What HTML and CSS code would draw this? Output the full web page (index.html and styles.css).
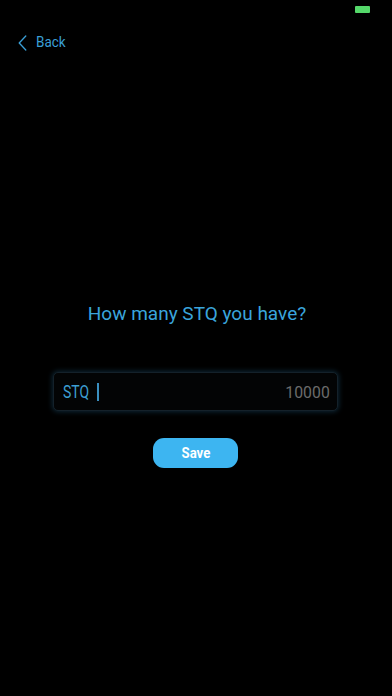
FILE: index.html
```html
<!DOCTYPE html>
<html lang="en">
<head>
<meta charset="utf-8">
<meta name="viewport" content="width=device-width, initial-scale=1">
<title>STQ</title>
<link rel="stylesheet" href="styles.css">
</head>
<body>
<div class="screen">
  <div class="status-bar">
    <span class="battery"></span>
  </div>
  <nav class="nav">
    <a class="back" href="#">
      <svg class="chevron" width="9" height="16" viewBox="0 0 9 16" aria-hidden="true">
        <path d="M7.8 1 L1.2 8 L7.8 15" fill="none" stroke="#3a9fd6" stroke-width="1.3" stroke-linecap="round" stroke-linejoin="round"/>
      </svg>
      <span class="back-label">Back</span>
    </a>
  </nav>
  <main class="content">
    <h1 class="question">How many STQ you have?</h1>
    <div class="field">
      <span class="field-label">STQ</span>
      <span class="caret"></span>
      <span class="field-value">10000</span>
    </div>
    <button class="save" type="button"><span class="save-label">Save</span></button>
  </main>
</div>
</body>
</html>
```

FILE: styles.css
```css
html, body {
  margin: 0;
  padding: 0;
  background: #000;
}

body {
  font-family: Roboto, "Noto Sans", "Liberation Sans", sans-serif;
  color: #3a9fd6;
}

.screen {
  width: 392px;
  height: 696px;
  background: #000;
  display: flex;
  flex-direction: column;
}

.status-bar {
  height: 20px;
  box-sizing: border-box;
  padding: 6px 22px 0 0;
  display: flex;
  justify-content: flex-end;
  align-items: flex-start;
}

.battery {
  display: block;
  width: 15px;
  height: 7px;
  background: #55d86a;
  border-radius: 1px;
}

.nav {
  margin-top: 12px;
  height: 20px;
  padding-left: 18px;
  display: flex;
  align-items: center;
}

.back {
  display: flex;
  align-items: center;
  text-decoration: none;
  color: #3a9fd6;
}

.chevron {
  display: block;
  margin-top: 1px;
}

.back-label {
  margin-left: 9px;
  font-size: 15.5px;
  line-height: 20px;
  display: inline-block;
  transform: scaleX(0.87);
  transform-origin: left center;
}

.content {
  margin-top: 250px;
  display: flex;
  flex-direction: column;
  align-items: center;
}

.question {
  margin: 0;
  font-size: 19px;
  line-height: 24px;
  font-weight: 400;
  color: #3aa5dc;
  text-align: center;
  padding-left: 2px;
}

.field {
  margin-top: 46px;
  width: 285px;
  height: 39px;
  box-sizing: border-box;
  margin-right: 1px;
  border: 1px solid #14212a;
  border-radius: 5px;
  background: #030405;
  box-shadow: 0 0 5px 1px rgba(40, 110, 150, 0.35);
  display: flex;
  align-items: center;
  padding: 0 7px 0 9px;
}

.field-label {
  font-size: 17.5px;
  line-height: 20px;
  color: #3d9fd3;
  display: inline-block;
  transform: scaleX(0.8);
  transform-origin: left center;
  width: 27px;
}

.caret {
  display: block;
  width: 1.5px;
  height: 18px;
  background: #3a8fc0;
  margin-left: 7px;
}

.field-value {
  margin-left: auto;
  font-size: 17px;
  line-height: 20px;
  color: #6b6b6b;
  display: inline-block;
  transform: scaleX(0.93);
  transform-origin: right center;
}

.save {
  margin-top: 27px;
  margin-right: 1px;
  width: 85px;
  height: 30px;
  border: none;
  border-radius: 11px;
  background: #3db5f1;
  color: #fff;
  font-family: Roboto, "Noto Sans", "Liberation Sans", sans-serif;
  font-weight: 700;
  font-size: 15.5px;
  padding: 0;
  cursor: pointer;
  display: flex;
  align-items: center;
  justify-content: center;
}

.save-label {
  display: inline-block;
  transform: scaleX(0.85);
}
```
